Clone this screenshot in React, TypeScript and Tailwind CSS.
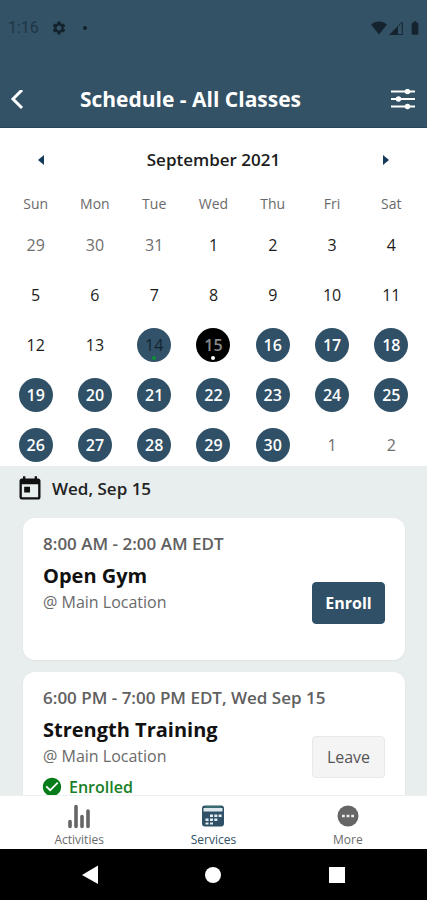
import { useState } from 'react'
import { MdBatteryFull, MdCheckCircle, MdSettings, MdToday } from 'react-icons/md'

type DayKind = 'outside' | 'plain' | 'past' | 'selected' | 'open'

interface Day {
  num:  number
  kind: DayKind
}

interface GymClass {
  id:       string
  time:     string
  name:     string
  location: string
  enrolled: boolean
}

const WEEKDAYS = ['Sun', 'Mon', 'Tue', 'Wed', 'Thu', 'Fri', 'Sat']

const DAY_STYLES: Record<DayKind, string> = {
  outside:  'text-[#6e6e6e]',
  plain:    'text-[#1c1c1c]',
  past:     'bg-[#315268] text-[#14242e]',
  selected: 'bg-black text-[#8a8a8a] font-semibold',
  open:     'bg-[#2f5066] text-white font-semibold',
}

function kindOf(num: number): DayKind {
  if (num < 14) return 'plain'
  if (num === 14) return 'past'
  if (num === 15) return 'selected'
  return 'open'
}

const DAYS: Day[] = [
  ...[29, 30, 31].map(num => ({ num, kind: 'outside' as const })),
  ...Array.from({ length: 30 }, (_, i) => ({ num: i + 1, kind: kindOf(i + 1) })),
  ...[1, 2].map(num => ({ num, kind: 'outside' as const })),
]

const CLASSES: GymClass[] = [
  { id: 'gym',      time: '8:00 AM - 2:00 AM EDT',             name: 'Open Gym',          location: '@ Main Location', enrolled: false },
  { id: 'strength', time: '6:00 PM - 7:00 PM EDT, Wed Sep 15', name: 'Strength Training', location: '@ Main Location', enrolled: true },
]

function StatusBar() {
  return (
    <div className="flex h-14 items-center justify-between pl-2 pr-1 text-[#14232d]">
      <div className="flex items-center">
        <span className="font-['Roboto',sans-serif] text-base text-[#203644]">1:16</span>
        <MdSettings className="ml-3 size-4" />
        <span className="ml-4 size-1 rounded-full bg-current" />
      </div>
      <div className="flex items-center gap-0.5">
        <svg viewBox="0 0 16 14" className="h-3.5 w-4" fill="currentColor">
          <path d="M0 3.5C4.5-.6 11.500-.6 16 3.500L8 13.500z" />
        </svg>
        <svg viewBox="0 0 14 14" className="size-3.5" fill="currentColor">
          <path d="M0 14 9 5v9z" />
          <path d="M9 5.300l4.300-4.300v12.500H9" fill="none" stroke="currentColor" strokeWidth="1" />
        </svg>
        <MdBatteryFull className="ml-0.5 size-4" />
      </div>
    </div>
  )
}

function Header() {
  return (
    <header className="shrink-0 border-b border-[#27465a] bg-[#335265]">
      <StatusBar />
      <div className="mt-4 flex h-[55px] items-center pl-2 pr-3">
        <button aria-label="Back" className="p-0.5 text-white">
          <svg viewBox="0 0 14 20" className="h-5 w-3.5" fill="none" stroke="currentColor" strokeWidth="3">
            <path d="M12 0 3 9l9 9" />
          </svg>
        </button>
        <h1 className="flex-1 pr-9 text-center text-[21px] font-bold text-white">Schedule - All Classes</h1>
        <button aria-label="Filter classes" className="text-white">
          <svg viewBox="0 0 24 22" className="h-[22px] w-6" fill="currentColor" stroke="currentColor" strokeWidth="2">
            <path d="M0 2.500h24M0 10h24M0 17.500h24" />
            <circle cx="16.500" cy="2.500" r="1.700" />
            <circle cx="7.500" cy="10" r="1.700" />
            <circle cx="16.500" cy="17.500" r="1.700" />
          </svg>
        </button>
      </div>
    </header>
  )
}

function Calendar() {
  return (
    <section className="shrink-0 bg-white px-1.5 pb-1 pt-4">
      <div className="flex h-8 items-center justify-between px-7">
        <button aria-label="Previous month" className="p-1 text-[#173a5c]">
          <svg viewBox="0 0 6 10" className="h-2.5 w-1.5" fill="currentColor"><path d="M6 0v10L0 5z" /></svg>
        </button>
        <h2 className="text-[17px] font-semibold text-[#1c1c1c]">September 2021</h2>
        <button aria-label="Next month" className="p-1 text-[#173a5c]">
          <svg viewBox="0 0 6 10" className="h-2.5 w-1.5" fill="currentColor"><path d="M0 0v10l6-5z" /></svg>
        </button>
      </div>
      <table className="w-full table-fixed text-center">
        <thead>
          <tr className="h-9">
            {WEEKDAYS.map(day => (
              <th key={day} className="pt-5 text-sm leading-4 font-normal text-[#6a6a6a]">{day}</th>
            ))}
          </tr>
        </thead>
        <tbody>
          {[0, 1, 2, 3, 4].map(week => (
            <tr key={week}>
              {DAYS.slice(week * 7, week * 7 + 7).map(({ num, kind }) => (
                <td key={num} className="pt-4">
                  <button className={`relative mx-auto flex size-[34px] items-center justify-center rounded-full text-base ${DAY_STYLES[kind]}`}>
                    {num}
                    {kind === 'past' && <span className="absolute bottom-0.5 size-1 rounded-full bg-[#0f8f35]" />}
                    {kind === 'selected' && <span className="absolute bottom-0.5 size-1 rounded-full bg-white" />}
                  </button>
                </td>
              ))}
            </tr>
          ))}
        </tbody>
      </table>
    </section>
  )
}

function ClassCard({ item, onToggle }: { item: GymClass; onToggle: (id: string) => void }) {
  return (
    <li className="min-h-[142px] shrink-0 rounded-xl bg-white px-5 pb-3 pt-3 shadow-xs">
      <p className="text-[17px] leading-7 font-semibold text-[#606060]">{item.time}</p>
      <div className="flex items-start justify-between">
        <div className="pt-0.5">
          <h3 className="text-xl leading-8 font-bold text-[#111]">{item.name}</h3>
          <p className="text-base leading-5 text-[#6a6a6a]">{item.location}</p>
          {item.enrolled && (
            <p className="mt-2.5 flex items-center gap-1.5 text-base leading-4 font-semibold text-[#178026]">
              <MdCheckCircle className="-ml-0.5 size-[22px] text-[#067d1a]" />
              Enrolled
            </p>
          )}
        </div>
        <button
          onClick={() => onToggle(item.id)}
          className={`mt-6 h-[42px] w-[73px] rounded border text-base ${
            item.enrolled
              ? 'border-[#e9e9e9] bg-[#f4f4f4] text-[#555]'
              : 'border-[#2f5066] bg-[#2f5066] font-bold text-white'
          }`}
        >
          {item.enrolled ? 'Leave' : 'Enroll'}
        </button>
      </div>
    </li>
  )
}

function TabBar() {
  return (
    <nav className="grid h-[54px] shrink-0 grid-cols-3 border-t border-[#eceff0] bg-white px-3 text-xs leading-4 text-[#6a6a6a]">
      <a href="#activities" className="flex flex-col items-center pt-2">
        <svg viewBox="0 0 22 26" className="h-[26px] w-[22px]" fill="none" stroke="#666" strokeWidth="3.600" strokeLinecap="round">
          <path d="M2 17.500v5M8 2.500v20M14 12.500v10M20 7v15.500" />
        </svg>
        <span className="mt-0.5">Activities</span>
      </a>
      <a href="#services" className="flex flex-col items-center pt-2 text-[#2f5066]">
        <svg viewBox="0 0 24 26" className="h-[26px] w-6">
          <rect x="1" y="1.500" width="22" height="21" rx="3" fill="#2f5066" />
          <path d="M2.500 4h19v3.500h-19z" fill="#dce8ec" />
          <path d="M4 3h16" stroke="#3d7773" strokeWidth="1.500" />
          <path d="M9 10.500h3V13H9zM13.300 10.500h3V13h-3zM17.600 10.500h3V13h-3zM4.500 14.500h3V17h-3zM9 14.500h3V17H9zM13.300 14.500h3V17h-3zM4.500 18.500h3v2h-3zM9 18.500h3v2H9z" fill="#e4edf1" />
        </svg>
        <span className="mt-0.5">Services</span>
      </a>
      <a href="#more" className="flex flex-col items-center pt-2">
        <svg viewBox="0 0 22 26" className="h-[26px] w-[22px]">
          <circle cx="11" cy="12" r="10.500" fill="#666" />
          <path d="M5 10.700h2.800v2.600H5zM9.600 10.700h2.800v2.600H9.600zM14.200 10.700h2.800v2.600h-2.800z" fill="#eee" />
        </svg>
        <span className="mt-0.5">More</span>
      </a>
    </nav>
  )
}

function SystemBar() {
  return (
    <div className="grid h-[51px] shrink-0 grid-cols-3 place-items-center bg-black px-7 text-white">
      <button aria-label="System back">
        <svg viewBox="0 0 18 20" className="h-5 w-[18px]" fill="currentColor"><path d="M17 .500v18.500L1 10z" /></svg>
      </button>
      <button aria-label="Home" className="size-4 rounded-full bg-white" />
      <button aria-label="Recent apps" className="size-4 bg-white" />
    </div>
  )
}

export default function App() {
  const [classes, setClasses] = useState(CLASSES)

  const toggle = (id: string) =>
    setClasses(list => list.map(c => (c.id === id ? { ...c, enrolled: !c.enrolled } : c)))

  return (
    <div className="flex h-screen flex-col bg-[#e8eded] font-['Open_Sans','Noto_Sans',sans-serif]">
      <Header />
      <Calendar />
      <main className="flex min-h-0 flex-1 flex-col overflow-hidden">
        <div className="flex h-[46px] shrink-0 items-center gap-2 pl-4">
          <MdToday className="size-7 text-[#111]" />
          <h2 className="text-[17px] font-semibold text-[#222]">Wed, Sep 15</h2>
        </div>
        <ul className="flex flex-col gap-3 pl-[23px] pr-[22px] pt-1.5">
          {classes.map(item => <ClassCard key={item.id} item={item} onToggle={toggle} />)}
        </ul>
      </main>
      <TabBar />
      <SystemBar />
    </div>
  )
}
